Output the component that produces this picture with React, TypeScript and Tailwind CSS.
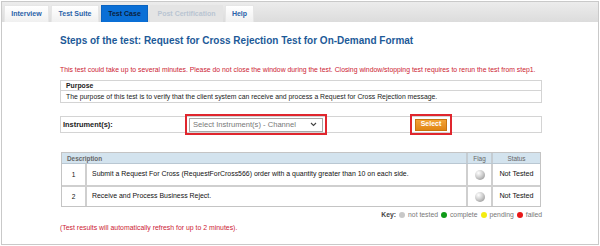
import React from "react";

const F = { fontFamily: '"Liberation Sans", Arial, sans-serif' };

function Tab({ label, kind }: { label: string; kind: "normal" | "active" | "disabled" }) {
  const base = "h-[17px] flex items-center justify-center text-[7px] font-bold border-t border-x";
  if (kind === "active")
    return <div className={`${base} bg-[#0a6fd6] text-[#0b1f3f] border-[#0a63c0]`}>{label}</div>;
  if (kind === "disabled")
    return <div className={`${base} bg-[#e4e4e4] text-[#b9c4d2] border-[#e4e4e4]`}>{label}</div>;
  return <div className={`${base} bg-gradient-to-b from-[#ffffff] to-[#f0f0f0] text-[#2a62a8] border-[#e6e6e6]`}>{label}</div>;
}

function Ball({ className = "" }: { className?: string }) {
  return (
    <div
      className={`w-[10px] h-[10px] rounded-full bg-[radial-gradient(circle_at_35%_30%,#ffffff_0%,#cfcfcf_45%,#858585_100%)] ${className}`}
    />
  );
}

function Dot({ color }: { color: string }) {
  return <span className={`inline-block w-[6px] h-[6px] rounded-full ${color}`} />;
}

export default function App() {
  return (
    <div className="w-[600px] h-[246px] bg-white pt-[1px] pl-[1px]" style={F}>
      <div className="w-[598px] h-[244px] border border-[#c9c9c9] flex flex-col">
        {/* tab bar */}
        <div className="h-[20px] bg-gradient-to-b from-[#ececec] to-[#dcdcdc] flex items-end pl-[2px] gap-[2px]">
          <div className="w-[45px]"><Tab label="Interview" kind="normal" /></div>
          <div className="w-[48px]"><Tab label="Test Suite" kind="normal" /></div>
          <div className="w-[47px]"><Tab label="Test Case" kind="active" /></div>
          <div className="w-[73px]"><Tab label="Post Certification" kind="disabled" /></div>
          <div className="w-[29px]"><Tab label="Help" kind="normal" /></div>
        </div>

        {/* content */}
        <div className="pl-[58px] pr-[56px] flex flex-col">
          <div className="mt-[13px] h-[12px] leading-[12px] text-[10px] font-bold text-[#1d5a98] whitespace-nowrap">
            Steps of the test: Request for Cross Rejection Test for On-Demand Format
          </div>

          <div className="mt-[18px] h-[9px] leading-[9px] text-[6.85px] text-[#cc2233] whitespace-nowrap">
            This test could take up to several minutes. Please do not close the window during the test. Closing window/stopping test requires to rerun the test from step1.
          </div>

          {/* purpose box */}
          <div className="mt-[6px] border border-[#d4d4d4] text-[6.85px] text-[#222]">
            <div className="h-[10px] leading-[10px] pl-[5px] font-bold border-b border-[#d4d4d4]">Purpose</div>
            <div className="h-[11px] leading-[11px] pl-[5px] whitespace-nowrap">
              The purpose of this test is to verify that the client system can receive and process a Request for Cross Rejection message.
            </div>
          </div>

          {/* instrument row */}
          <div className="mt-[13px] h-[17px] border border-[#d4d4d4] flex items-center">
            <div className="w-[124px] pl-[2px] text-[7.4px] font-bold text-[#222]">Instrument(s):</div>
            <div className="h-[21px] w-[142px] border-2 border-[#e0262e] flex items-center pl-[2px]">
              <div className="h-[14px] w-[134px] border border-[#a8a8a8] bg-white flex items-center justify-between px-[3px]">
                <span className="text-[7.6px] text-[#777] whitespace-nowrap">Select Instrument(s) - Channel</span>
                <svg width="7" height="5" viewBox="0 0 7 5" className="mr-[2px]">
                  <path d="M1 1 L3.5 3.5 L6 1" fill="none" stroke="#444" strokeWidth="1.1" />
                </svg>
              </div>
            </div>
            <div className="w-[83px]" />
            <div className="h-[21px] w-[42px] border-2 border-[#e0262e] flex items-center justify-center">
              <div className="h-[12px] w-[32px] bg-gradient-to-b from-[#f2a234] to-[#e08512] border border-[#c87410] flex items-center justify-center text-[7px] font-bold text-white">
                Select
              </div>
            </div>
          </div>

          {/* steps table */}
          <div className="mt-[19px] ml-[1px] w-[480px] border border-[#c4c4c4] text-[6.95px]">
            <div className="h-[11px] bg-[#d3e3ee] flex text-[6.4px] font-bold text-[#666] border-b border-[#b9c7d2]">
              <div className="flex-1 pl-[5px] leading-[11px]">Description</div>
              <div className="w-[25px] border-l-2 border-[#c4ccd2] text-center leading-[11px] font-normal">Flag</div>
              <div className="w-[49px] border-l-2 border-[#c4ccd2] text-center leading-[11px] font-normal">Status</div>
            </div>
            <div className="h-[23px] flex items-stretch border-b-2 border-[#cfcfcf] text-[#111]">
              <div className="w-[25px] border-r-2 border-[#cfcfcf] flex items-center justify-center text-[6.6px]">1</div>
              <div className="flex-1 flex items-center pl-[5px] whitespace-nowrap">
                Submit a Request For Cross (RequestForCross566) order with a quantity greater than 10 on each side.
              </div>
              <div className="w-[25px] border-l-2 border-[#cfcfcf] flex items-center justify-center"><Ball /></div>
              <div className="w-[49px] border-l-2 border-[#cfcfcf] flex items-center justify-center text-[7.2px]">Not Tested</div>
            </div>
            <div className="h-[19px] flex items-stretch text-[#111]">
              <div className="w-[25px] border-r-2 border-[#cfcfcf] flex items-center justify-center text-[6.6px]">2</div>
              <div className="flex-1 flex items-center pl-[5px] whitespace-nowrap">Receive and Process Business Reject.</div>
              <div className="w-[25px] border-l-2 border-[#cfcfcf] flex items-center justify-center"><Ball /></div>
              <div className="w-[49px] border-l-2 border-[#cfcfcf] flex items-center justify-center text-[7.2px]">Not Tested</div>
            </div>
          </div>

          {/* key */}
          <div className="mt-[3px] w-[482px] flex justify-end items-center gap-[3px] text-[6.8px] text-[#777] whitespace-nowrap">
            <span className="font-bold text-[#444]">Key:</span>
            <Dot color="bg-[#c8c8c8]" />
            <span>not tested</span>
            <Dot color="bg-[#0f9a18]" />
            <span>complete</span>
            <Dot color="bg-[#f4ec10]" />
            <span>pending</span>
            <Dot color="bg-[#e81818]" />
            <span>failed</span>
          </div>

          <div className="mt-[3px] text-[6.9px] text-[#cc2233] whitespace-nowrap">
            (Test results will automatically refresh for up to 2 minutes).
          </div>
        </div>
      </div>
    </div>
  );
}
